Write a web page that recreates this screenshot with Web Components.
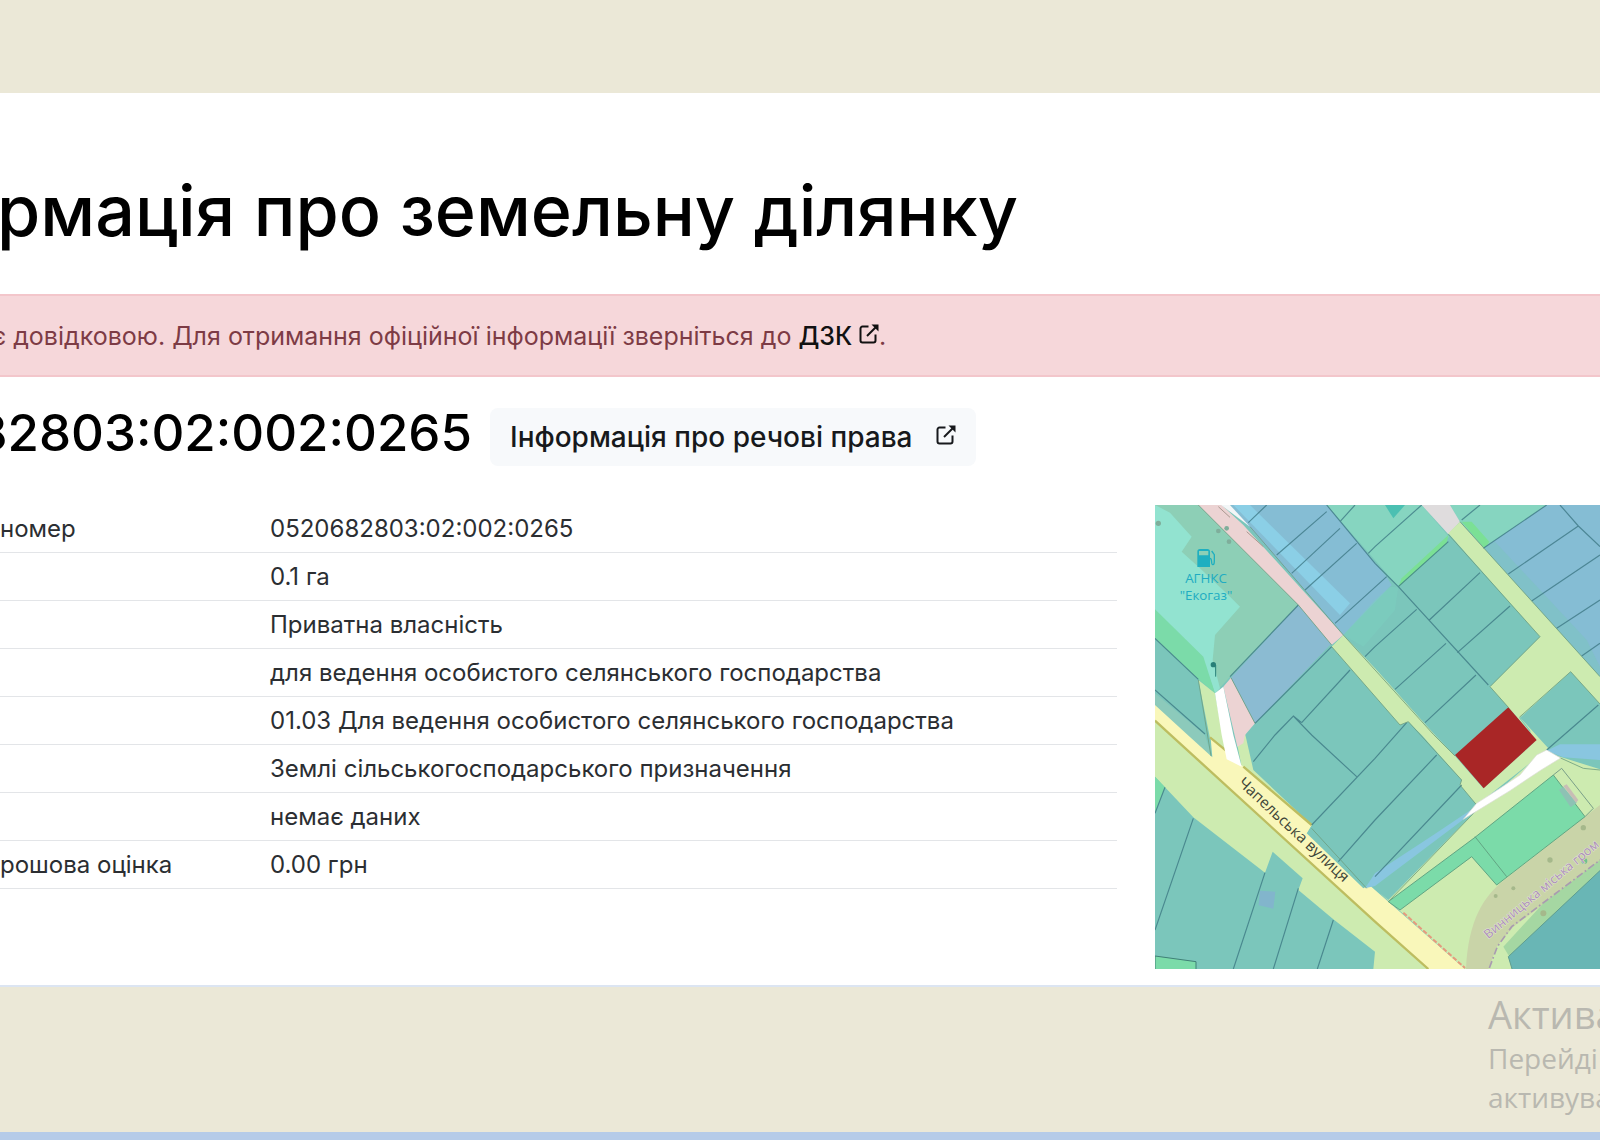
<!DOCTYPE html>
<html lang="uk">
<head>
<meta charset="utf-8">
<title>Інформація про земельну ділянку</title>
<style>
  body { margin: 0; background: #ebe8d7; font-family: Inter, "Noto Sans", sans-serif; overflow: hidden; }
</style>
</head>
<body>
<land-page></land-page>
<script>
const define = (name, html) => customElements.define(name, class extends HTMLElement {
  constructor() {
    super();
    this.attachShadow({ mode: 'open' }).innerHTML = html;
  }
});

define('external-icon', `
<style>
  :host { display: inline-block; width: 20px; height: 20px; }
  svg { display: block; width: 100%; height: 100%; }
</style>
<svg viewBox="0 0 20 20" fill="none" stroke="currentColor" stroke-width="2" aria-hidden="true">
  <path d="M9.5 2.5H3.500a2 2 0 0 0-2 2V16.500a2 2 0 0 0 2 2H14.500a2 2 0 0 0 2-2V10.500"/>
  <path d="M8 12 17.500 2.500"/>
  <path d="M12.500 0.500H19.500V7.500Z" fill="currentColor" stroke="none"/>
</svg>`);

define('notice-bar', `
<style>
  :host { display: block; background: #f6d7da; border: solid #f3c6cb; border-width: 2px 0; color: #7d3b45; padding: 25px 0 23px; font-size: 25px; line-height: 31px; }
  p { margin: 0 0 0 -8px; white-space: nowrap; }
</style>
<p role="alert"><slot></slot></p>`);

define('text-link', `
<style>
  :host { display: inline; }
  a { color: #111; font-weight: 500; text-decoration: none; }
  external-icon { vertical-align: 1px; }
</style>
<a href="#dzk"><slot></slot> <external-icon></external-icon></a>`);

define('rights-button', `
<style>
  :host { display: block; }
  button { display: flex; align-items: center; gap: 24px; height: 58px; padding: 0 20px; border: 0; border-radius: 8px; background: #f7f9fb; color: #17191c; font: 500 28px/32px Inter, "Noto Sans", sans-serif; white-space: nowrap; }
  external-icon { margin-bottom: 4px; }
</style>
<button type="button"><slot></slot><external-icon></external-icon></button>`);

define('parcel-table', `
<style>
  :host { display: block; }
  table { width: 100%; border-collapse: collapse; table-layout: fixed; color: #2b2e32; font-size: 24px; line-height: 31px; }
  th, td { height: 47px; padding: 0; border-bottom: 1px solid #e3e5e8; text-align: left; font-weight: 400; white-space: nowrap; }
  th { width: 270px; }
</style>
<table>
  <tr><th scope="row">номер</th><td>0520682803:02:002:0265</td></tr>
  <tr><th></th><td>0.1 га</td></tr>
  <tr><th></th><td>Приватна власність</td></tr>
  <tr><th></th><td>для ведення особистого селянського господарства</td></tr>
  <tr><th></th><td>01.03 Для ведення особистого селянського господарства</td></tr>
  <tr><th></th><td>Землі сільськогосподарського призначення</td></tr>
  <tr><th></th><td>немає даних</td></tr>
  <tr><th scope="row">рошова оцінка</th><td>0.00 грн</td></tr>
</table>`);

define('parcel-map', `
<style>
  :host { display: block; }
  svg { display: block; width: 100%; height: 464px; }
  text { font-family: "Open Sans", "Noto Sans", sans-serif; font-weight: 500; }
</style>
<svg viewBox="15 15 1335 1392" preserveAspectRatio="xMinYMin slice" role="img" aria-label="Мапа">
  <rect x="15" y="15" width="1335" height="1392" fill="#7bc6bb"/>
  <!-- filling station grounds -->
  <path fill="#8dcfb6" d="M15 15H145L445 315 240 530 195 580 15 400Z"/>
  <path fill="#92e3d0" d="M15 15 60 38 125 110 95 155 150 205 235 285 270 320 195 405 188 480 210 565 195 580 160 480 15 340Z"/>
  <path fill="#7bdba9" d="M15 328 160 470 195 580 145 538 15 415Z"/>
  <!-- verges and the main road -->
  <path fill="#cdebb0" d="M145 540 195 580 225 745 260 780 180 715ZM285 700 310 810 485 975 470 1000 275 800 262 735ZM15 660 60 705 675 1265 835 1407H670L675 1355 550 1258 445 1170 458 1135 368 1055 345 1118 130 952 45 862 15 830Z"/>
  <path fill="#8ccabb" d="M15 580 165 705 185 770 15 620Z"/>
  <path fill="#f9f7ba" d="M15 615 110 702 187 772 182 715 260 780 280 800 485 975 470 1000 640 1165 658 1155 675 1170 945 1407H835L675 1265 60 705 15 660Z"/>
  <path fill="none" stroke="#bdbd60" stroke-width="7" d="M15 662 60 703 675 1265 835 1407M180 712 260 778M280 800 485 975"/>
  <path fill="#ecd3d3" d="M220 560 243 533 315 670 285 705 280 730 262 740Z"/>
  <path fill="#fff" d="M195 580 220 560 250 705 275 800 230 778 215 705Z"/>
  <path fill="#7bdba9" d="M15 830 45 862 15 935Z"/>
  <path fill="#7bdba9" stroke="#3f8076" stroke-width="3" d="M15 1368 138 1385V1410H15Z"/>
  <path fill="#82b5cc" d="M330 1172 376 1175 370 1226 326 1216Z"/>
  <!-- upper road and blue parcels -->
  <path fill="#85bdd4" d="M240 15H530L710 230 725 255 580 405Z"/>
  <path fill="#8bcfe6" d="M250 15H300L600 310 570 345Z"/>
  <path fill="#86d5c0" d="M530 15H815L897 110 745 260Z"/>
  <path fill="#7bcfbf" d="M675 300 720 260 745 262 735 330 675 400 640 440 580 405Z" opacity=".5"/>
  <path fill="#8bbbd2" d="M445 315 545 430 315 670 243 533Z"/>
  <path fill="#ecd3d3" d="M145 15H215L280 75 580 405 545 435 445 315Z"/>
  <path fill="#f3f6f7" d="M213 15H240L300 80Z"/>
  <path fill="#cdebb0" d="M580 405 675 505 850 700 915 768 1000 865 1160 720 1190 750 980 915 930 855 935 840 815 705 775 665 750 675 545 440Z"/>
  <path fill="#4bc0b2" d="M705 15H765L730 55Z"/>
  <path fill="#7be095" d="M895 105 890 130 745 262 755 235Z"/>
  <path fill="#86d5c0" d="M900 15H1190L1010 145 930 65Z"/>
  <path fill="#7be095" d="M935 65H965L1018 125 1005 147Z"/>
  <path fill="#85bdd4" d="M1190 15H1350V530L1000 145Z"/>
  <path fill="#7bc6bb" d="M1000 145 1035 125 1310 420 1350 500V530Z" opacity=".5"/>
  <path fill="#dfdcdd" d="M815 15H900L930 65 895 103Z"/>
  <path fill="#cdebb0" d="M895 100 930 65 1350 530V612L1262 515 1108 655 1160 720 1075 622 1020 560 1170 410Z"/>
  <!-- south-east block -->
  <path fill="#cdebb0" d="M715 1200 985 925 1180 755 1230 770 1350 808V1115L1078 1370 1090 1407H945L690 1180Z"/>
  <path fill="#cdebb0" d="M1108 650 1195 745 1160 765 1140 690Z"/>
  <path fill="#89c6e0" d="M1190 752 1230 733H1350V780L1240 772ZM945 955 980 918 850 1005 675 1120 645 1165 675 1158Z"/>
  <path fill="#c9d4a8" d="M1350 915 1305 950 1075 1130C1000 1185 955 1260 948 1407H1015L1040 1340 1090 1280 1350 1085Z"/>
  <path fill="#a5d7a2" d="M1350 1080 1180 1210 1060 1340 1078 1370 1350 1112Z"/>
  <path fill="#69b6b5" stroke="#5f9d90" stroke-width="3" d="M1354 1108 1075 1370 1087 1410H1354Z"/>
  <path fill="none" stroke="#7a9f88" stroke-width="3" d="M1210 825 1235 805 1330 925 1305 950"/>
  <path fill="#7bdba9" stroke="#62a583" stroke-width="3" d="M1210 825 1305 950 1040 1155 965 1070 750 1230 715 1205 975 1012ZM975 1010 1070 1130"/>
  <path fill="#8dc2b4" d="M1227 870 1240 860 1280 908 1262 922Z"/>
  <path fill="#c8bdb5" d="M1240 858 1250 853 1285 900 1278 908Z"/>
  <path fill="none" stroke="#e59a7d" stroke-width="6" stroke-dasharray="14 6" d="M760 1238 945 1404"/>
  <path fill="none" stroke="#a99bb0" stroke-width="5" stroke-dasharray="22 8 5 8" d="M1018 1404 1042 1340 1085 1280 1350 1080"/>
  <g fill="#a5b88b"><circle cx="1300" cy="983" r="8"/><circle cx="1200" cy="1080" r="8"/><circle cx="1090" cy="1165" r="6"/><circle cx="1037" cy="1188" r="6"/><circle cx="1180" cy="1240" r="9"/><circle cx="1303" cy="1083" r="9" fill="#6fc18f"/></g>
  <path fill="#a92626" d="M1075 622 1160 720 1001 865 915 765Z"/>
  <!-- parcel boundaries -->
  <path fill="none" stroke="#3a7480" stroke-opacity=".75" stroke-width="3.500" d="M295 68 350 15M380 165 530 35M425 220 570 85M465 270 620 130M555 370 710 230M530 15 675 190 745 260 1015 555M570 65 615 15M655 160 675 140 815 15M745 260 895 125M838 360 990 218M922 458 1080 318M675 440 800 328M735 568 888 430M825 668 978 525M455 668 600 510M645 470 675 440M935 60 990 15M1000 145 1190 15M1075 222 1285 78M1145 303 1350 165M1220 385 1350 300M1295 468 1350 430M1230 15 1285 78 1350 140M1190 750 1345 615M45 862 15 940M130 955 15 1290M345 1118 250 1407M445 1165 370 1407M550 1260 502 1407M485 975 675 775 770 668M310 785 375 705 430 648 485 705 620 830M455 668 430 648M565 1085 675 960 860 765M675 1130 935 855M15 415 145 538M445 315 240 530M545 440 315 670M15 570 165 702"/>
  <path fill="none" stroke="#6b9c7e" stroke-opacity=".8" stroke-width="3" d="M145 15 445 315 545 435M300 80 580 405 850 703 915 768M895 103 1170 410 1020 560 1075 622M545 440 750 675 775 665 935 840 930 855 980 915M930 65 1350 530M1108 652 1262 515 1350 612M243 533 315 670M715 1205 985 925M485 985 650 1165M145 540 183 768M1190 755 1300 805 1350 810"/>
  <path fill="#fff" stroke="#dcdcd6" stroke-width="2" d="M1160 765 1190 750 1232 774 1170 812 1080 872 940 958 980 910 1050 865 1110 825Z"/>
  <path fill="none" stroke="#a9988f" stroke-width="3" d="M205 20 240 52M290 95 340 140"/>
  <g fill="#7fae9b"><circle cx="205" cy="93" r="7"/><circle cx="230" cy="85" r="7"/><circle cx="237" cy="125" r="7"/><circle cx="25" cy="70" r="8"/></g>
  <!-- fuel pump and mast symbols -->
  <g fill="#1fafc0"><path fill-rule="evenodd" d="M142 155q0-8 8-8h22q8 0 8 8v46h-38ZM147 153v13h28v-13Z"/><path fill="none" stroke="#1fafc0" stroke-width="4" d="M180 175c8 0 2 19 8 19s5-8 5-30l-8-11"/></g>
  <path stroke="#287f78" stroke-width="3" d="M197 495V530"/><circle cx="190" cy="494" r="8" fill="#287f78"/>
  <g fill="#20acc2" font-size="40" text-anchor="middle"><text x="168" y="250">АГНКС</text><text x="168" y="300">"Екогаз"</text></g>
  <text x="0" y="0" font-size="46" fill="#3e4538" stroke="#f9f7ba" stroke-width="4" paint-order="stroke" transform="translate(262 852) rotate(43)">Чапельська вулиця</text>
  <text x="0" y="0" font-size="38" fill="#ad8fbb" stroke="#e3e7d2" stroke-width="3" paint-order="stroke" transform="translate(1015 1318) rotate(-40)">Винницька міська гром</text>
</svg>`);

define('activation-note', `
<style>
  :host { display: block; color: #b9b8b0; font-family: "Open Sans", "Noto Sans", sans-serif; white-space: nowrap; }
  h2, p { margin: 0; font-weight: 400; }
  h2 { font-size: 38px; line-height: 50px; }
  p { font-size: 28px; line-height: 39px; }
</style>
<h2>Актива</h2><p>Перейді<br>активува</p>`);

define('land-page', `
<style>
  :host { display: flex; flex-direction: column; min-height: 100vh; box-sizing: border-box; border-bottom: 8px solid #b5cbe8; }
  main { margin-top: 93px; padding: 78px 0 16px; background: #fff; border-bottom: 2px solid #dce5f2; }
  h1, h2 { margin: 0; font-weight: 500; color: #000; white-space: nowrap; display: flex; justify-content: flex-end; }
  h1 { width: 1018px; font-size: 70px; line-height: 80px; }
  notice-bar { margin-top: 43px; }
  .number { display: flex; align-items: center; gap: 18px; margin-top: 31px; }
  h2 { width: 472px; font-size: 51px; line-height: 50px; padding-bottom: 8px; }
  .details { display: grid; grid-template-columns: minmax(0, 1117fr) minmax(0, 445fr); gap: 38px; margin-top: 39px; }
  activation-note { align-self: flex-end; width: 112px; margin-top: 2px; }
</style>
<main>
  <h1>рмація про земельну ділянку</h1>
  <notice-bar>є довідковою. Для отримання офіційної інформації зверніться до <text-link>ДЗК</text-link>.</notice-bar>
  <div class="number"><h2>82803:02:002:0265</h2><rights-button>Інформація про речові права</rights-button></div>
  <div class="details"><parcel-table></parcel-table><parcel-map></parcel-map></div>
</main>
<activation-note></activation-note>`);
</script>
</body>
</html>
